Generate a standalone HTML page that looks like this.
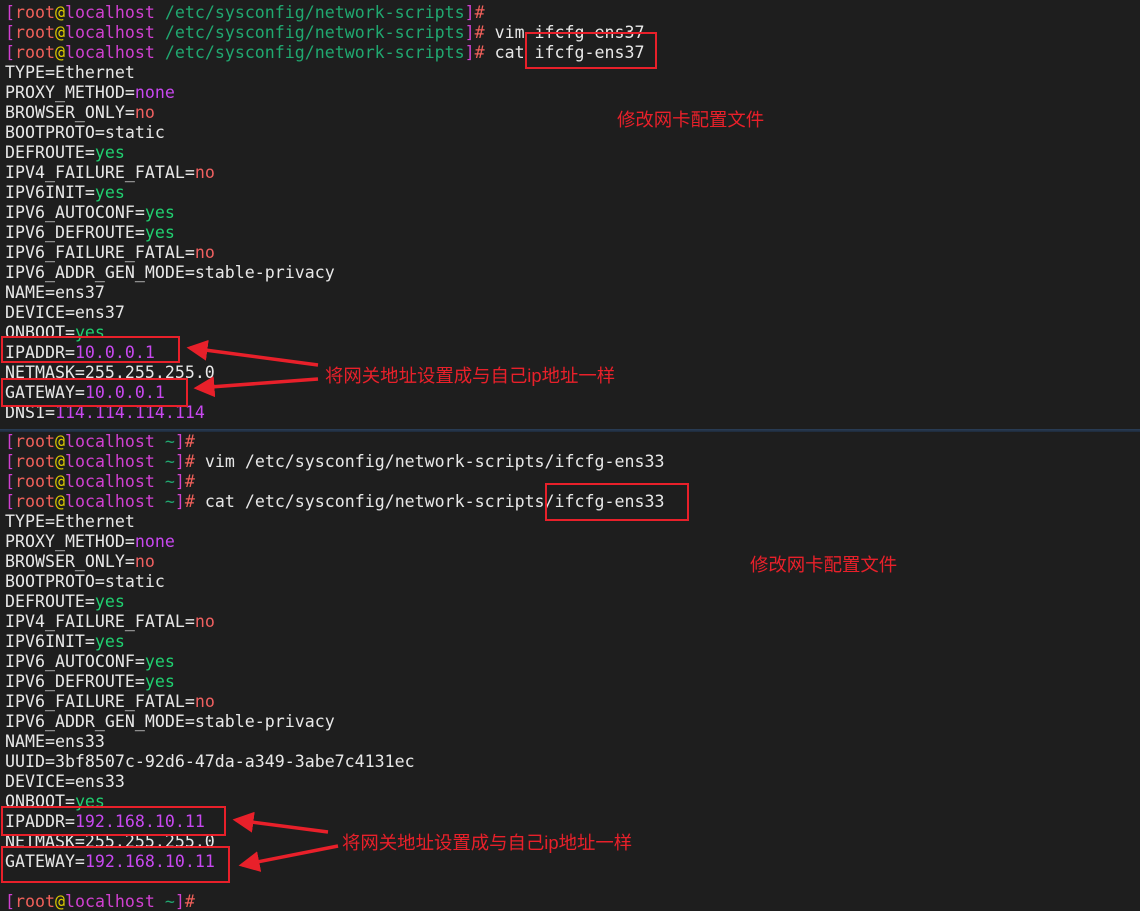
<!DOCTYPE html>
<html><head><meta charset="utf-8"><style>
html,body{margin:0;padding:0;background:#1e1e1e;width:1140px;height:911px;overflow:hidden;position:relative}
.p{position:absolute;left:5px;font-family:"DejaVu Sans Mono","Liberation Mono",monospace;font-size:16.6px;line-height:20px;color:#e8e8e8;white-space:pre}
.b{color:#d040d0}.r{color:#f0605a}.a{color:#d8c800}.h{color:#d040d0}.g{color:#20a870}.y{color:#20d070}.m{color:#c848f0}.n{color:#f06060}
.c{position:absolute;font-family:"Liberation Sans","Noto Sans CJK SC",sans-serif;font-size:18.4px;color:#e8202a;white-space:nowrap}
.div{position:absolute;left:0;top:429px;width:1140px;height:3px;background:linear-gradient(#2a3e58,#1e2a3a)}
</style></head><body>
<div class="p" style="top:3px"><span class="b">[</span><span class="r">root</span><span class="a">@</span><span class="h">localhost</span> <span class="g">/etc/sysconfig/network-scripts</span><span class="b">]</span><span class="r">#</span>
<span class="b">[</span><span class="r">root</span><span class="a">@</span><span class="h">localhost</span> <span class="g">/etc/sysconfig/network-scripts</span><span class="b">]</span><span class="r">#</span> vim ifcfg-ens37
<span class="b">[</span><span class="r">root</span><span class="a">@</span><span class="h">localhost</span> <span class="g">/etc/sysconfig/network-scripts</span><span class="b">]</span><span class="r">#</span> cat ifcfg-ens37
TYPE=Ethernet
PROXY_METHOD=<span class="m">none</span>
BROWSER_ONLY=<span class="n">no</span>
BOOTPROTO=static
DEFROUTE=<span class="y">yes</span>
IPV4_FAILURE_FATAL=<span class="n">no</span>
IPV6INIT=<span class="y">yes</span>
IPV6_AUTOCONF=<span class="y">yes</span>
IPV6_DEFROUTE=<span class="y">yes</span>
IPV6_FAILURE_FATAL=<span class="n">no</span>
IPV6_ADDR_GEN_MODE=stable-privacy
NAME=ens37
DEVICE=ens37
ONBOOT=<span class="y">yes</span>
IPADDR=<span class="m">10.0.0.1</span>
NETMASK=255.255.255.0
GATEWAY=<span class="m">10.0.0.1</span>
DNS1=<span class="m">114.114.114.114</span></div>
<div class="div"></div>
<div class="p" style="top:432px"><span class="b">[</span><span class="r">root</span><span class="a">@</span><span class="h">localhost</span> <span class="g">~</span><span class="b">]</span><span class="r">#</span>
<span class="b">[</span><span class="r">root</span><span class="a">@</span><span class="h">localhost</span> <span class="g">~</span><span class="b">]</span><span class="r">#</span> vim /etc/sysconfig/network-scripts/ifcfg-ens33
<span class="b">[</span><span class="r">root</span><span class="a">@</span><span class="h">localhost</span> <span class="g">~</span><span class="b">]</span><span class="r">#</span>
<span class="b">[</span><span class="r">root</span><span class="a">@</span><span class="h">localhost</span> <span class="g">~</span><span class="b">]</span><span class="r">#</span> cat /etc/sysconfig/network-scripts/ifcfg-ens33
TYPE=Ethernet
PROXY_METHOD=<span class="m">none</span>
BROWSER_ONLY=<span class="n">no</span>
BOOTPROTO=static
DEFROUTE=<span class="y">yes</span>
IPV4_FAILURE_FATAL=<span class="n">no</span>
IPV6INIT=<span class="y">yes</span>
IPV6_AUTOCONF=<span class="y">yes</span>
IPV6_DEFROUTE=<span class="y">yes</span>
IPV6_FAILURE_FATAL=<span class="n">no</span>
IPV6_ADDR_GEN_MODE=stable-privacy
NAME=ens33
UUID=3bf8507c-92d6-47da-a349-3abe7c4131ec
DEVICE=ens33
ONBOOT=<span class="y">yes</span>
IPADDR=<span class="m">192.168.10.11</span>
NETMASK=255.255.255.0
GATEWAY=<span class="m">192.168.10.11</span>

<span class="b">[</span><span class="r">root</span><span class="a">@</span><span class="h">localhost</span> <span class="g">~</span><span class="b">]</span><span class="r">#</span></div>
<div class="c" style="left:617px;top:106px">修改网卡配置文件</div>
<div class="c" style="left:325px;top:362px">将网关地址设置成与自己ip地址一样</div>
<div class="c" style="left:750px;top:551px">修改网卡配置文件</div>
<div class="c" style="left:342px;top:829px">将网关地址设置成与自己ip地址一样</div>
<svg width="1140" height="911" style="position:absolute;left:0;top:0">
<defs><marker id="ar" markerWidth="6" markerHeight="6" refX="5" refY="3" orient="auto" markerUnits="strokeWidth"><path d="M0,0 L6,3 L0,6 Z" fill="#e8202a"/></marker></defs>
<g fill="none" stroke="#e8202a" stroke-width="2">
<rect x="526" y="33" width="130" height="35"/>
<rect x="2" y="337" width="177" height="25"/>
<rect x="2" y="379" width="185" height="27"/>
<rect x="546" y="484" width="142" height="36"/>
<rect x="2" y="807" width="223" height="28"/>
<rect x="2" y="847" width="227" height="35"/>
</g>
<g stroke="#e8202a" stroke-width="3.5" marker-end="url(#ar)">
<line x1="318" y1="365" x2="190" y2="348"/>
<line x1="318" y1="379" x2="197" y2="388"/>
<line x1="328" y1="832" x2="236" y2="820"/>
<line x1="338" y1="846" x2="242" y2="865"/>
</g>
</svg>
</body></html>
